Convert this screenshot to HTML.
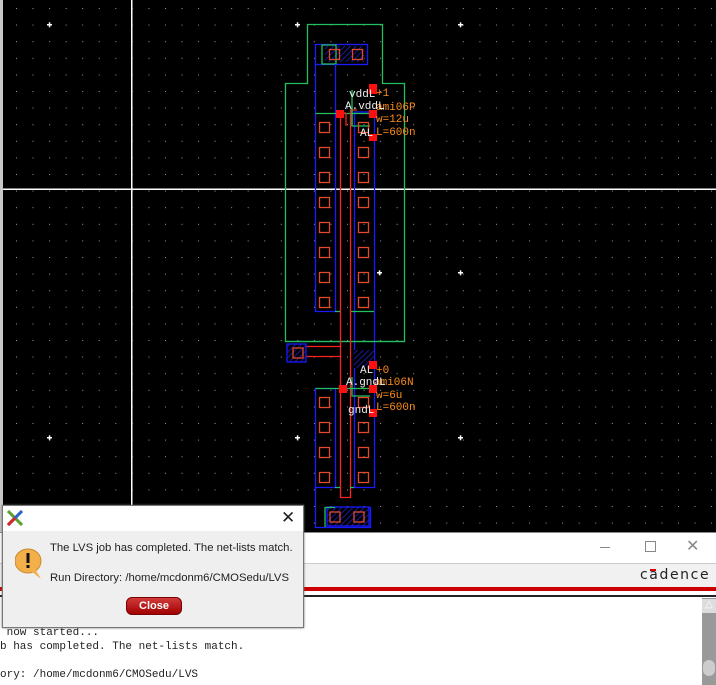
<!DOCTYPE html>
<html><head><style>
html,body{margin:0;padding:0;width:716px;height:685px;overflow:hidden;background:#fff;font-family:"Liberation Sans",sans-serif}
.abs{position:absolute}
</style></head><body>
<svg class="abs" style="left:0;top:0" width="716" height="533" viewBox="0 0 716 533">
<defs>
<pattern id="dots" x="16" y="8" width="16.55" height="16.6" patternUnits="userSpaceOnUse"><rect x="0" y="0" width="1" height="1" fill="#9a9ab0"/></pattern>
<pattern id="hatch" width="4" height="4" patternUnits="userSpaceOnUse" patternTransform="rotate(45)"><rect width="4" height="4" fill="#000"/><line x1="0" y1="0" x2="0" y2="4" stroke="#2020d0" stroke-width="1.5"/></pattern>
</defs>
<rect width="716" height="533" fill="#000"/>
<rect x="0" y="0" width="3" height="533" fill="#c8c8c8"/>
<rect x="3" width="713" height="533" fill="url(#dots)"/>
<g fill="#fff">
<rect x="47" y="24" width="5" height="1.5"/><rect x="48.8" y="22.3" width="1.5" height="5"/>
<rect x="295" y="24" width="5" height="1.5"/><rect x="296.8" y="22.3" width="1.5" height="5"/>
<rect x="458" y="24" width="5" height="1.5"/><rect x="459.8" y="22.3" width="1.5" height="5"/>
<rect x="295" y="437" width="5" height="1.5"/><rect x="296.8" y="435.3" width="1.5" height="5"/>
<rect x="458" y="437" width="5" height="1.5"/><rect x="459.8" y="435.3" width="1.5" height="5"/>
<rect x="458" y="272" width="5" height="1.5"/><rect x="459.8" y="270.3" width="1.5" height="5"/>
<rect x="47" y="437" width="5" height="1.5"/><rect x="48.8" y="435.3" width="1.5" height="5"/>
<rect x="377" y="272" width="5" height="1.5"/><rect x="378.8" y="270.3" width="1.5" height="5"/>
</g>
<rect x="131" y="0" width="1.5" height="533" fill="#fff"/>
<rect x="3" y="188.5" width="713" height="1.5" fill="#fff"/>
<g fill="none" stroke-width="1.3">
<path d="M307.5 24.5H382.5V83.5H404.5V341.5H285.5V83.5H307.5Z" stroke="#20c060"/>
<rect x="325" y="46" width="39" height="16" fill="url(#hatch)" stroke="none"/>
<rect x="315.5" y="44.5" width="52" height="20" stroke="#1a1aff"/>
<rect x="322" y="45" width="14" height="19" stroke="#20c060"/>
<path d="M315.5 64V311.5H335.5V64" stroke="#1a1aff"/>
<path d="M354.5 112V487.5H374.5V112Z" stroke="#1a1aff"/>
<path d="M315.5 113.5H370" stroke="#20c060"/>
<path d="M335 311.5H340M350 311.5H374" stroke="#20c060"/>
<path d="M285.5 341.5H404.5" stroke="#20c060"/>
<path d="M340.5 113V497.5H350.5V110H357" stroke="#ff2020"/>
<path d="M340.5 113H346" stroke="#ff2020"/>
<path d="M346 126V113" stroke="#ff2020"/>
<path d="M306 346.5H340.5M306 356.5H340.5" stroke="#ff2020"/>
<rect x="287" y="344" width="19" height="18" fill="url(#hatch)" stroke="#1a1aff"/>
<rect x="354" y="350" width="20" height="18" fill="url(#hatch)" stroke="none"/>
<path d="M315.5 388.5V487.5H335.5V388.5Z" stroke="#1a1aff"/>
<path d="M315.5 388.5H374" stroke="#20c060"/>
<path d="M335 487.5H340M350 487.5H354" stroke="#20c060"/>
<path d="M315.5 487V527.5H370.5V507.5H325" stroke="#1a1aff"/>
<rect x="327" y="507" width="42" height="19" fill="url(#hatch)" stroke="#1a1aff"/>
<path d="M325 527V507.5H335" stroke="#20c060"/>
<path d="M352 377V396H370" stroke="#20c060"/>
<path d="M352 107V126H370" stroke="#20c060"/>
<path d="M352 90V126" stroke="#20c060"/>
</g>
<g fill="none" stroke="#e04a2a" stroke-width="1.3">
<rect x="329.5" y="49.5" width="10" height="10"/><rect x="352.5" y="49.5" width="10" height="10"/>
<rect x="319.5" y="122.5" width="10" height="10"/><rect x="358.5" y="122.5" width="10" height="10"/>
<rect x="319.5" y="147.5" width="10" height="10"/><rect x="358.5" y="147.5" width="10" height="10"/>
<rect x="319.5" y="172.5" width="10" height="10"/><rect x="358.5" y="172.5" width="10" height="10"/>
<rect x="319.5" y="197.5" width="10" height="10"/><rect x="358.5" y="197.5" width="10" height="10"/>
<rect x="319.5" y="222.5" width="10" height="10"/><rect x="358.5" y="222.5" width="10" height="10"/>
<rect x="319.5" y="247.5" width="10" height="10"/><rect x="358.5" y="247.5" width="10" height="10"/>
<rect x="319.5" y="272.5" width="10" height="10"/><rect x="358.5" y="272.5" width="10" height="10"/>
<rect x="319.5" y="297.5" width="10" height="10"/><rect x="358.5" y="297.5" width="10" height="10"/>
<rect x="319.5" y="397.5" width="10" height="10"/><rect x="358.5" y="397.5" width="10" height="10"/>
<rect x="319.5" y="422.5" width="10" height="10"/><rect x="358.5" y="422.5" width="10" height="10"/>
<rect x="319.5" y="447.5" width="10" height="10"/><rect x="358.5" y="447.5" width="10" height="10"/>
<rect x="319.5" y="472.5" width="10" height="10"/><rect x="358.5" y="472.5" width="10" height="10"/>
<rect x="293" y="348" width="10" height="10"/>
<rect x="330" y="512" width="10" height="10"/><rect x="354" y="512" width="10" height="10"/>
</g>
<g fill="#ff1010">
<rect x="369" y="84" width="8" height="10"/><rect x="336" y="110" width="8" height="8"/><rect x="369" y="110" width="8" height="8"/><rect x="369" y="134" width="8" height="7"/>
<rect x="369" y="361" width="8" height="8"/><rect x="339" y="385" width="8" height="8"/><rect x="369" y="385" width="8" height="8"/><rect x="369" y="409" width="8" height="8"/>
</g>
<g font-family="Liberation Mono,monospace" font-size="11">
<g fill="#ff8c1a">
<text x="376" y="96">+1</text><text x="376" y="110">ami06P</text><text x="376" y="122">w=12u</text><text x="376" y="135">L=600n</text>
<text x="376" y="373">+0</text><text x="374" y="385">ami06N</text><text x="376" y="398">w=6u</text><text x="376" y="410">L=600n</text>
</g>
<g fill="#f0f0f0">
<text x="349" y="97">vddL</text><text x="345" y="109">A.vddL</text><text x="360" y="136">AL</text>
<text x="360" y="373">AL</text><text x="346" y="385">A.gndL</text><text x="348" y="413">gndL</text>
</g>
</g>
</svg>

<div class="abs" style="left:0;top:532px;width:716px;height:1px;background:#888"></div>
<div class="abs" style="left:0;top:533px;width:716px;height:30px;background:#fff"></div>
<div class="abs" style="left:600px;top:547px;width:10px;height:1px;background:#888"></div>
<div class="abs" style="left:645px;top:541px;width:9px;height:9px;border:1px solid #888"></div>
<div class="abs" style="left:686px;top:536px;font-size:16px;color:#888">✕</div>
<div class="abs" style="left:0;top:563px;width:716px;height:24px;background:#f1f1f1;border-top:1px solid #ccc"></div>
<div class="abs" style="left:640px;top:567px;font-size:14px;letter-spacing:1.6px;color:#222;font-family:'DejaVu Sans',sans-serif">cadence</div>
<div class="abs" style="left:650px;top:569px;width:6px;height:2px;background:#d00"></div>
<div class="abs" style="left:0;top:587px;width:716px;height:4px;background:#cc0000"></div>
<div class="abs" style="left:0;top:595px;width:716px;height:2px;background:#222"></div>
<div class="abs" style="left:702px;top:598px;width:14px;height:87px;background:#999"></div>
<div class="abs" style="left:702px;top:599px;width:14px;height:14px;background:#ddd;color:#fff;font-size:10px;text-align:center">△</div>
<div class="abs" style="left:703px;top:660px;width:12px;height:16px;background:#ccc;border-radius:6px"></div>
<div class="abs" style="left:0;top:626px;font-family:'Liberation Mono',monospace;font-size:11px;line-height:14px;color:#222;white-space:pre"> now started...
b has completed. The net-lists match.

ory: /home/mcdonm6/CMOSedu/LVS</div>

<div class="abs" style="left:2px;top:505px;width:300px;height:121px;background:#efefef;border:1px solid #777;box-shadow:0 0 2px #666">
 <div style="height:25px;background:#fff;position:relative">
  <svg width="16" height="16" style="position:absolute;left:4px;top:4px"><path d="M1 1L15 15" stroke="#5aa02c" stroke-width="3"/><path d="M15 1L1 15" stroke="#2a63c8" stroke-width="3"/><path d="M1 15L8 8" stroke="#d22" stroke-width="3"/></svg>
  <div class="abs" style="left:278px;top:2px;font-size:17px;color:#222">✕</div>
 </div>
 <svg class="abs" style="left:12px;top:42px" width="30" height="32"><ellipse cx="13" cy="13" rx="13" ry="12" fill="#f3b04a" stroke="#c98a2c"/><path d="M16 23L26 31L20 21Z" fill="#f3b04a"/><rect x="11.5" y="5" width="3" height="10" fill="#111"/><rect x="11.5" y="17" width="3" height="3" fill="#111"/></svg>
 <div class="abs" style="left:47px;top:36px;font-size:11.3px;color:#222">The LVS job has completed. The net-lists match.</div>
 <div class="abs" style="left:47px;top:66px;font-size:11.3px;color:#222">Run Directory: /home/mcdonm6/CMOSedu/LVS</div>
 <div class="abs" style="left:123px;top:91px;width:54px;height:16px;border-radius:6px;background:linear-gradient(#d23a3a,#a00000);border:1px solid #700;color:#fff;font-weight:bold;font-size:11px;text-align:center;line-height:16px">Close</div>
</div>
</body></html>
